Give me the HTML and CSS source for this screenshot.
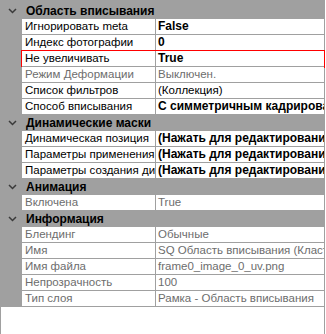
FILE: index.html
```html
<!DOCTYPE html>
<html lang="ru">
<head>
    <meta charset="UTF-8">
    <title>Свойства слоя</title>
    <link rel="stylesheet" href="styles.css">
</head>
<body>
    <div class="grid">
        <div class="category first">
            <span class="toggle"><svg width="9" height="6" viewBox="0 0 9 6"><polyline points="1,1 4.5,4.5 8,1"/></svg></span>
            <span class="title">Область вписывания</span>
        </div>
        <div class="row">
            <span class="gutter"></span>
            <div class="cells"><span class="label">Игнорировать meta</span><span class="value bold">False</span></div>
        </div>
        <div class="row">
            <span class="gutter"></span>
            <div class="cells"><span class="label">Индекс фотографии</span><span class="value bold">0</span></div>
        </div>
        <div class="row selected">
            <span class="gutter"></span>
            <div class="cells"><span class="label">Не увеличивать</span><span class="value bold">True</span></div>
        </div>
        <div class="row readonly">
            <span class="gutter"></span>
            <div class="cells"><span class="label">Режим Деформации</span><span class="value">Выключен.</span></div>
        </div>
        <div class="row">
            <span class="gutter"></span>
            <div class="cells"><span class="label">Список фильтров</span><span class="value">(Коллекция)</span></div>
        </div>
        <div class="row">
            <span class="gutter"></span>
            <div class="cells"><span class="label">Способ вписывания</span><span class="value bold">С симметричным кадрированием</span></div>
        </div>

        <div class="category">
            <span class="toggle"><svg width="9" height="6" viewBox="0 0 9 6"><polyline points="1,1 4.5,4.5 8,1"/></svg></span>
            <span class="title">Динамические маски</span>
        </div>
        <div class="row">
            <span class="gutter"></span>
            <div class="cells"><span class="label">Динамическая позиция</span><span class="value bold">(Нажать для редактирования)</span></div>
        </div>
        <div class="row">
            <span class="gutter"></span>
            <div class="cells"><span class="label">Параметры применения</span><span class="value bold">(Нажать для редактирования)</span></div>
        </div>
        <div class="row">
            <span class="gutter"></span>
            <div class="cells"><span class="label">Параметры создания динамической маски</span><span class="value bold">(Нажать для редактирования)</span></div>
        </div>

        <div class="category">
            <span class="toggle"><svg width="9" height="6" viewBox="0 0 9 6"><polyline points="1,1 4.5,4.5 8,1"/></svg></span>
            <span class="title">Анимация</span>
        </div>
        <div class="row readonly">
            <span class="gutter"></span>
            <div class="cells"><span class="label">Включена</span><span class="value">True</span></div>
        </div>

        <div class="category">
            <span class="toggle"><svg width="9" height="6" viewBox="0 0 9 6"><polyline points="1,1 4.5,4.5 8,1"/></svg></span>
            <span class="title">Информация</span>
        </div>
        <div class="row readonly">
            <span class="gutter"></span>
            <div class="cells"><span class="label">Блендинг</span><span class="value">Обычные</span></div>
        </div>
        <div class="row readonly">
            <span class="gutter"></span>
            <div class="cells"><span class="label">Имя</span><span class="value">SQ Область вписывания (Кластер)</span></div>
        </div>
        <div class="row readonly">
            <span class="gutter"></span>
            <div class="cells"><span class="label">Имя файла</span><span class="value">frame0_image_0_uv.png</span></div>
        </div>
        <div class="row readonly">
            <span class="gutter"></span>
            <div class="cells"><span class="label">Непрозрачность</span><span class="value">100</span></div>
        </div>
        <div class="row readonly">
            <span class="gutter"></span>
            <div class="cells"><span class="label">Тип слоя</span><span class="value">Рамка - Область вписывания</span></div>
        </div>
    </div>
</body>
</html>
```

FILE: styles.css
```css
body {
    margin: 0;
    background: #fff;
    font-family: "Liberation Sans", Arial, sans-serif;
    font-size: 11.5px;
    color: #000;
}
.grid {
    width: 323px;
    height: 334px;
    border-left: 1px solid #a0a0a0;
    border-right: 1px solid #a0a0a0;
    background: #fff;
}
.category {
    display: flex;
    align-items: center;
    height: 16px;
    background: #a0a0a0;
    font-weight: bold;
    font-size: 12px;
}
.category.first {
    height: 19px;
    padding-top: 3px;
    box-sizing: border-box;
}
.toggle {
    width: 21px;
    display: flex;
    justify-content: center;
    padding-left: 2px;
    box-sizing: border-box;
}
.toggle svg {
    display: block;
}
.toggle polyline {
    fill: none;
    stroke: #3a3a3a;
    stroke-width: 1.5;
}
.title {
    padding-left: 4px;
    white-space: nowrap;
}
.row {
    display: flex;
    height: 16px;
}
.gutter {
    width: 21px;
    flex: none;
    background: #a0a0a0;
}
.cells {
    flex: 1;
    display: grid;
    grid-template-columns: 133px 1fr;
    column-gap: 1px;
    padding-bottom: 1px;
    background: #a0a0a0;
    min-width: 0;
}
.label, .value {
    background: #fff;
    line-height: 15px;
    padding-left: 3px;
    white-space: nowrap;
    overflow: hidden;
}
.value {
    padding-left: 2px;
}
.bold {
    font-weight: bold;
    font-size: 12px;
}
.readonly .label, .readonly .value {
    color: #6d6d6d;
}
.selected .cells {
    outline: 1px solid #f00;
    outline-offset: 0;
}
```
